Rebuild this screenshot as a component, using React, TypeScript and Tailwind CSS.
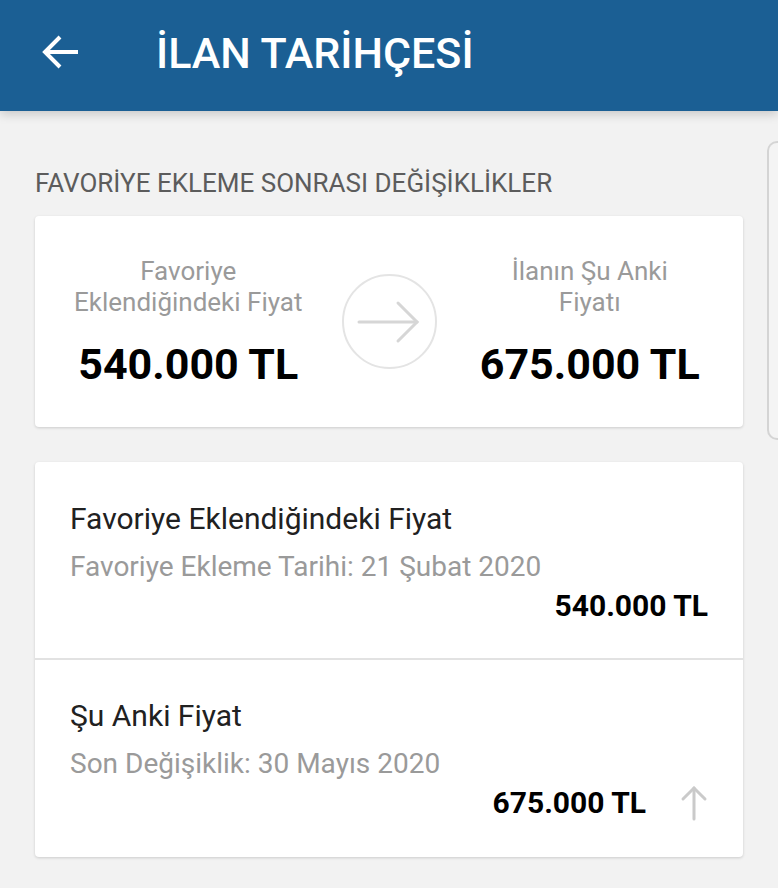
import React from "react";

function BackArrow() {
  return (
    <svg width="38" height="36" viewBox="0 0 38 36" fill="none" stroke="white" strokeWidth="4" strokeLinecap="square">
      <path d="M35 18H5" />
      <path d="M19 3L4 18L19 33" strokeLinecap="butt" />
    </svg>
  );
}

function CircleArrow() {
  return (
    <div className="w-[95px] h-[95px] rounded-full border-2 border-[#e4e4e4] flex items-center justify-center shrink-0">
      <svg width="64" height="44" viewBox="0 0 64 44" fill="none" stroke="#d6d6d6" strokeWidth="3" strokeLinecap="round">
        <path d="M2 22H60" />
        <path d="M41 3L60 22L41 41" />
      </svg>
    </div>
  );
}

function UpArrow() {
  return (
    <svg width="28" height="36" viewBox="0 0 28 36" fill="none" stroke="#cacaca" strokeWidth="3" strokeLinecap="round">
      <path d="M14 34V3" />
      <path d="M3 14L14 3L25 14" />
    </svg>
  );
}

export default function App() {
  return (
    <div className="w-[778px] h-[888px] bg-[#f2f2f2] overflow-hidden font-['Roboto',sans-serif]">
      <header className="relative z-10 h-[111px] bg-[#1b5f94] flex items-start shadow-[0_3px_10px_rgba(0,0,0,0.18)]">
        <div className="ml-[41px] mt-[34px]">
          <BackArrow />
        </div>
        <h1 className="ml-[77px] mt-[27px] text-white text-[43px] leading-[52px] font-medium">İLAN TARİHÇESİ</h1>
      </header>

      <div className="flex">
        <main className="w-[743px] pl-[35px] shrink-0">
          <div className="pt-[57px] text-[26px] leading-[30px] text-[#5c5c5c]">FAVORİYE EKLEME SONRASI DEĞİŞİKLİKLER</div>

          <section className="mt-[18px] h-[211px] bg-white rounded-[4px] shadow-[0_1px_3px_rgba(0,0,0,0.16)] flex items-center">
            <div className="flex-1 flex flex-col items-center text-center">
              <div className="text-[26px] leading-[31px] text-[#9a9a9a]">
                Favoriye<br />Eklendiğindeki Fiyat
              </div>
              <div className="mt-[23px] text-[43px] leading-[46px] font-bold text-black">540.000 TL</div>
            </div>
            <CircleArrow />
            <div className="flex-1 flex flex-col items-center text-center">
              <div className="text-[26px] leading-[31px] text-[#9a9a9a]">
                İlanın Şu Anki<br />Fiyatı
              </div>
              <div className="mt-[23px] text-[43px] leading-[46px] font-bold text-black">675.000 TL</div>
            </div>
          </section>

          <section className="mt-[35px] bg-white rounded-[4px] shadow-[0_1px_3px_rgba(0,0,0,0.16)] flex flex-col">
            <div className="h-[198px] px-[35px] pt-[39px] border-b-2 border-[#e2e2e2]">
              <div className="text-[30px] leading-[36px] text-[#212121]">Favoriye Eklendiğindeki Fiyat</div>
              <div className="mt-[13px] text-[28px] leading-[34px] text-[#9a9a9a]">Favoriye Ekleme Tarihi: 21 Şubat 2020</div>
              <div className="mt-[4px] flex justify-end">
                <span className="text-[30px] leading-[36px] font-bold text-black">540.000 TL</span>
              </div>
            </div>
            <div className="h-[197px] px-[35px] pt-[38px]">
              <div className="text-[30px] leading-[36px] text-[#212121]">Şu Anki Fiyat</div>
              <div className="mt-[13px] text-[28px] leading-[34px] text-[#9a9a9a]">Son Değişiklik: 30 Mayıs 2020</div>
              <div className="mt-[4px] flex justify-end items-center gap-[34px]">
                <span className="text-[30px] leading-[36px] font-bold text-black">675.000 TL</span>
                <UpArrow />
              </div>
            </div>
          </section>
        </main>

        <aside className="ml-[24px] mt-[30px] w-[40px] h-[299px] shrink-0 rounded-l-[10px] border-2 border-r-0 border-[#d4d4d4] bg-[#f4f4f4]" />
      </div>
    </div>
  );
}
